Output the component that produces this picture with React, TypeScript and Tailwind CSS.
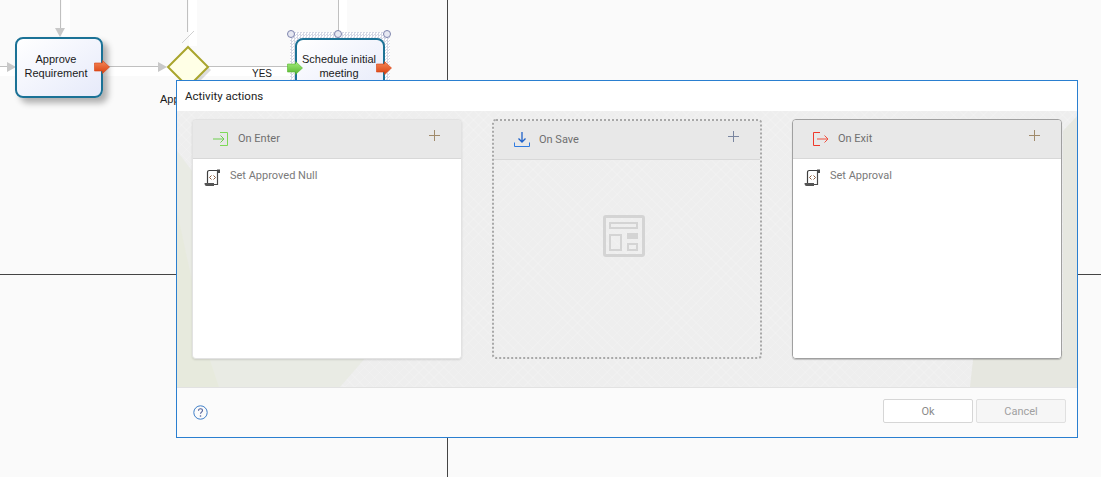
const uiFont = "font-['Roboto','Open_Sans',sans-serif]";
const diagramFont = "font-['Liberation_Sans',Arial,sans-serif]";

const ScriptIcon = () => (
  <svg width="18" height="18" viewBox="0 0 18 18" fill="none" className="shrink-0">
    <path d="M3.500 14.500V3.200C3.500 2 4.300 1.500 5.300 1.500H15" stroke="#3f3f3f" strokeWidth="1.200" />
    <path d="M13.500 2V15.500H5" stroke="#4a4a4a" strokeWidth="1.200" />
    <path d="M13 .5h3v3.500H14z" fill="#4a4a4a" />
    <path d="M.5 14h9.500v3H2.500C1.200 17 .5 16 .5 14z" fill="#555" />
    <path d="M7.500 6.500L5.500 8.500l2 2M9.500 6.500l2 2-2 2" stroke="#8a5a3a" strokeWidth="1" />
  </svg>
);

const EnterIcon = () => (
  <svg width="16" height="16" viewBox="0 0 16 16" fill="none" className="shrink-0">
    <path d="M7 1.500h7.500v13H7" stroke="#7ed957" strokeWidth="1" />
    <path d="M0 8h11M7.500 4.500L11 8l-3.500 3.500" stroke="#6fcf4f" strokeWidth="1" />
  </svg>
);

const SaveIcon = () => (
  <svg width="16" height="16" viewBox="0 0 16 16" fill="none" className="shrink-0">
    <path d="M8 0v10M4.500 6.500L8 10l3.500-3.500" stroke="#1f62c9" strokeWidth="1.300" />
    <path d="M.5 10.500v4h15v-4" stroke="#2f7be0" strokeWidth="1" />
  </svg>
);

const ExitIcon = () => (
  <svg width="16" height="16" viewBox="0 0 16 16" fill="none" className="shrink-0">
    <path d="M7 1.500H.5v13H7" stroke="#f0392b" strokeWidth="1" />
    <path d="M4 8h11M11.500 4.500L15 8l-3.500 3.500" stroke="#f0503f" strokeWidth="1" />
  </svg>
);

const PlusIcon = ({ color }: { color: string }) => (
  <svg width="11" height="11" viewBox="0 0 11 11" className="shrink-0">
    <path d="M5.500 0v11M0 5.500h11" stroke={color} strokeWidth="1" />
  </svg>
);

const LayoutIcon = () => (
  <svg width="42" height="42" viewBox="0 0 42 42" fill="none">
    <rect x="1.500" y="1.500" width="39" height="39" rx="1.500" stroke="#d4d4d4" strokeWidth="3" />
    <rect x="7" y="8" width="27" height="5" stroke="#d4d4d4" strokeWidth="2" />
    <rect x="7" y="20" width="11" height="15" stroke="#d4d4d4" strokeWidth="2" />
    <rect x="24" y="18" width="11" height="6" fill="#d4d4d4" />
    <rect x="25" y="29" width="9" height="6" stroke="#d4d4d4" strokeWidth="2" />
  </svg>
);

const HelpIcon = () => (
  <svg width="15" height="15" viewBox="0 0 15 15" fill="none">
    <circle cx="7.500" cy="7.500" r="6.700" stroke="#3f7fc8" strokeWidth="1" />
    <path d="M5.500 5.700c0-1.300 1-2 2-2s2 .7 2 1.900c0 1.500-2 1.500-2 3.200" stroke="#54629a" strokeWidth="1.100" />
    <circle cx="7.500" cy="11" r=".8" fill="#54629a" />
  </svg>
);

// flow arrows in the diagram
const FlowArrow = ({ from, to }: { from: string; to: string }) => {
  const id = `g${from.slice(1)}`;
  return (
    <svg width="16" height="14" viewBox="0 0 16 14">
      <defs>
        <linearGradient id={id} x1="0" y1="0" x2="0" y2="1">
          <stop offset="0" stopColor={from} />
          <stop offset="1" stopColor={to} />
        </linearGradient>
      </defs>
      <path d="M.5 3h8V.5L15.500 7 8.500 13.500V11H.5z" fill={`url(#${id})`} stroke={to} strokeWidth=".6" />
    </svg>
  );
};

const Handle = ({ className }: { className: string }) => (
  <div className={`absolute h-[8px] w-[8px] rounded-full border border-[#7d84ad] bg-[#e6e8f2] ${className}`} />
);

const Diagram = () => (
  <div className={`absolute inset-0 ${diagramFont} text-[11px] leading-[14px] text-[#1a1a1a]`}>
    {/* page guides */}
    <div className="absolute left-[447px] top-0 h-full w-px bg-[#444]" />
    <div className="absolute left-0 top-[274px] h-px w-full bg-[#444]" />

    {/* white bands beside the connectors */}
    <div className="absolute left-[62px] top-0 h-[37px] w-[8px] bg-white" />
    <div className="absolute left-[189px] top-0 h-[46px] w-[8px] bg-white" />
    <div className="absolute left-[339px] top-0 h-[32px] w-[8px] bg-white" />
    <div className="absolute left-0 top-[67px] h-[9px] w-[290px] bg-white" />

    {/* connectors */}
    <div className="absolute left-[60px] top-0 h-[30px] w-px bg-[#c0c0c0]" />
    <div className="absolute left-[187px] top-0 h-[32px] w-px bg-[#c0c0c0]" />
    <div className="absolute left-[338px] top-0 h-[32px] w-px bg-[#c0c0c0]" />
    <div className="absolute left-0 top-[66px] h-px w-[10px] bg-[#c0c0c0]" />
    <div className="absolute left-[108px] top-[66px] h-px w-[54px] bg-[#c0c0c0]" />
    <div className="absolute left-[208px] top-[66px] h-px w-[82px] bg-[#c0c0c0]" />
    <svg width="10" height="9" viewBox="0 0 10 9" className="absolute left-[55px] top-[28px]"><path d="M0 0h10L5 9z" fill="#c8c8c8" /></svg>
    <svg width="9" height="10" viewBox="0 0 9 10" className="absolute left-[7px] top-[62px]"><path d="M0 0v10l9-5z" fill="#c8c8c8" /></svg>
    <svg width="9" height="10" viewBox="0 0 9 10" className="absolute left-[158px] top-[62px]"><path d="M0 0v10l9-5z" fill="#c8c8c8" /></svg>
    <svg width="12" height="12" viewBox="0 0 12 12" className="absolute left-[182px] top-[31px]"><path d="M0 12L12 0" stroke="#d0d0d0" /></svg>

    {/* Approve Requirement */}
    <div className="absolute left-[15px] top-[37px] flex h-[61px] w-[88px] items-center justify-center rounded-[8px] border-2 border-[#1b7296] bg-gradient-to-br from-white to-[#e6eafa] pb-[4px] pr-[6px] text-center shadow-[5px_5px_6px_rgba(0,0,0,0.3)]">
      Approve<br />Requirement
    </div>
    <div className="absolute left-[94px] top-[60px]"><FlowArrow from="#f58a5a" to="#d9400f" /></div>

    {/* gateway */}
    <svg width="48" height="48" viewBox="0 0 48 48" className="absolute left-[164px] top-[43px]">
      <path d="M24 4L44 24 24 44 4 24z" fill="#00000022" transform="translate(3 3)" />
      <path d="M24 4L44 24 24 44 4 24z" fill="#ffffe6" stroke="#a9a52c" strokeWidth="2" />
    </svg>
    <div className="absolute left-[160px] top-[92px]">App</div>
    <div className="absolute left-[252px] top-[67px] text-[10px]">YES</div>

    {/* Schedule initial meeting, selected */}
    <div className="absolute left-[290px] top-[32px] h-[60px] w-[100px] bg-[repeating-conic-gradient(#d5d8e5_0_25%,#ffffff_0_50%)] bg-[length:3px_3px]" />
    <div className="absolute left-[295px] top-[38px] flex h-[60px] w-[90px] flex-col items-center rounded-[8px] border-2 border-[#1b7296] bg-gradient-to-br from-white to-[#e6eafa] pr-[2px] pt-[12px] text-center">
      Schedule initial<br />meeting
    </div>
    <Handle className="left-[287px] top-[30px]" />
    <Handle className="left-[334px] top-[30px]" />
    <Handle className="left-[383px] top-[30px]" />
    <div className="absolute left-[287px] top-[61px]"><FlowArrow from="#a6ee7e" to="#55b52e" /></div>
    <div className="absolute left-[376px] top-[61px]"><FlowArrow from="#f58a5a" to="#d9400f" /></div>
  </div>
);

const ActionCard = ({ icon, title, plus, item, variant }: { icon: React.ReactNode; title: string; plus: string; item?: string; variant: "plain" | "drop" | "focus" }) => {
  const frame =
    variant === "drop"
      ? "border-2 border-dotted border-[#a8a8a8]"
      : variant === "focus"
        ? "border border-[#a0a0a0] shadow-[0_1px_1px_rgba(0,0,0,0.2)]"
        : "border border-[#e2e2e2] shadow-[0_1px_2px_rgba(0,0,0,0.12)]";
  return (
    <div className={`flex h-[240px] w-[270px] flex-col overflow-hidden rounded-[4px] ${frame}`}>
      <div className="flex h-[39px] shrink-0 items-center border-b border-[#d8d8d8] bg-[#e8e8e8] pl-[20px] pr-[21px]">
        {icon}
        <span className="ml-[9px] mt-[1px] flex-1 text-[11px] text-[#6f6f6f]">{title}</span>
        <div className="-mt-[8px]"><PlusIcon color={plus} /></div>
      </div>
      {variant === "drop" ? (
        <div className="flex flex-1 items-center justify-center pb-[46px] pr-[7px]">
          <LayoutIcon />
        </div>
      ) : (
        <div className="flex flex-1 items-start gap-[8px] bg-white pl-[11px] pt-[10px]">
          <ScriptIcon />
          <span className="-mt-[1px] text-[11px] leading-[16px] text-[#7a7a7a]">{item}</span>
        </div>
      )}
    </div>
  );
};

const Modal = () => (
  <div className={`absolute left-[176px] top-[80px] flex h-[358px] w-[902px] flex-col border border-[#2a7fd0] bg-white ${uiFont}`}>
    <div className="flex h-[30px] shrink-0 items-center pl-[8px] pt-[1px] text-[11.500px] text-[#222]">Activity actions</div>
    <div className="relative flex h-[277px] shrink-0 justify-between overflow-hidden border-b border-[#e2e2e2] bg-[#eeeeee] bg-[repeating-linear-gradient(45deg,transparent_0_6px,rgba(255,255,255,0.12)_6px_7px),repeating-linear-gradient(-45deg,transparent_0_6px,rgba(255,255,255,0.12)_6px_7px)] pl-[15px] pr-[15px] pt-[8px]">
      <svg width="900" height="276" viewBox="0 0 900 276" className="absolute left-0 top-0">
        <path d="M0 40L60 120 190 245 163 276H0z" fill="#e8eae2" opacity=".85" />
        <path d="M0 100L30 240 42 276H0z" fill="#e6e9d8" opacity=".6" />
        <path d="M886 20L900 5V276H793L797 240H886z" fill="#e6e7e0" />
      </svg>
      <div className="relative"><ActionCard icon={<EnterIcon />} title="On Enter" plus="#a08a6a" item="Set Approved Null" variant="plain" /></div>
      <div className="relative"><ActionCard icon={<SaveIcon />} title="On Save" plus="#7a86a0" variant="drop" /></div>
      <div className="relative"><ActionCard icon={<ExitIcon />} title="On Exit" plus="#a08a6a" item="Set Approval" variant="focus" /></div>
    </div>
    <div className="flex flex-1 items-center justify-between bg-[#fbfbfb] pl-[16px] pr-[11px]">
      <HelpIcon />
      <div className="mb-[3px] flex gap-[3px]">
        <button className="h-[24px] w-[90px] rounded-[2px] border border-[#d6d6d6] bg-white pt-[2px] text-[11px] text-[#8a8a8a]">Ok</button>
        <button className="h-[24px] w-[90px] rounded-[2px] border border-[#e0e0e0] bg-[#f6f6f6] pt-[2px] text-[11px] text-[#a0a0a0]">Cancel</button>
      </div>
    </div>
  </div>
);

export default function App() {
  return (
    <div className="relative h-[477px] w-[1101px] overflow-hidden bg-[#fafafa]">
      <Diagram />
      <Modal />
    </div>
  );
}
